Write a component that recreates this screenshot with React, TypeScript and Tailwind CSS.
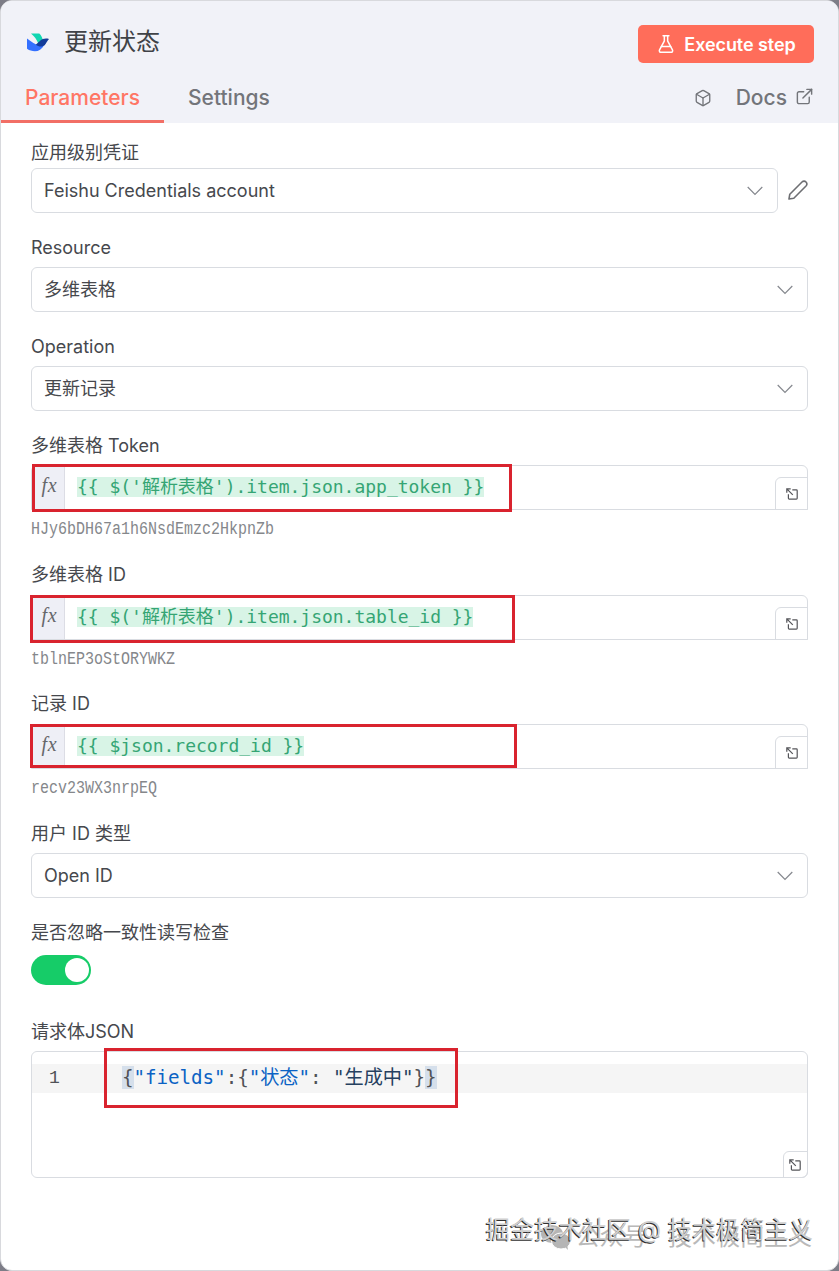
import type { ReactNode } from 'react'
import { Box, ExternalLink, FlaskConical } from 'lucide-react'

function FeishuLogo() {
  return (
    <svg className="h-[19px] w-6" viewBox="0 0 24 19" fill="none">
      <path d="M5 .6h8.300c1.700 1.700 2.800 3.700 3.400 6l-4.300 4.200C10.700 6.800 8.400 3.300 5 .6Z" fill="#10d6b2" />
      <path d="M1 5.500c4 3 8.500 6.500 13.500 7.300 1.500 0 2.600-.3 3.800-.9-2.500 4.200-5.600 6.300-9.400 6.300-3 0-5.600-.8-7.500-2.100-.3-.2-.4-.5-.4-.9V5.500Z" fill="#3370ff" />
      <path d="M23 6c-1.800 1.600-2.700 4.300-4.400 6.200-2.600 2.100-6 1.700-8.800-.4 3.500-3 6.200-7.600 13.200-5.800Z" fill="#133c9a" />
    </svg>
  )
}

function Chevron() {
  return (
    <svg className="h-[10px] w-4" viewBox="0 0 16 10" fill="none" stroke="#85888e" strokeWidth="1.2">
      <path d="m.7 1 7.300 7.400L15.300 1" />
    </svg>
  )
}

function Pencil() {
  return (
    <svg className="-mt-px h-5 w-5" viewBox="0 0 20 20" fill="none" stroke="#6e6f73" strokeWidth="1.600" strokeLinejoin="round">
      <path d="m1 19 .8-4.800L14 2c1.200-1.200 2.900-1.200 4 0s1.100 2.800 0 4L5.800 18.200 1 19Z" />
    </svg>
  )
}

function ExpandIcon() {
  return (
    <svg className="h-3 w-3" viewBox="0 0 12 12" fill="none" stroke="#55565a" strokeWidth="1.200">
      <path d="M.8 4.700V.8h3.900M.8.8l6 6M6.300 1.900h4.100c.5 0 .8.300.8.800v7.600c0 .5-.3.800-.8.800H3.200c-.5 0-.8-.3-.8-.8V6.300" />
    </svg>
  )
}

function Label({ children }: { children: ReactNode }) {
  return <div className="h-7 text-[18px] leading-[30px] text-[#46484d]">{children}</div>
}

function Select({ value }: { value: string }) {
  return (
    <div className="flex h-[45px] flex-1 items-center justify-between rounded-md border border-[#d9dce1] pl-3 pr-[14px] text-[18px] text-[#46484d]">
      <span>{value}</span>
      <Chevron />
    </div>
  )
}

function SelectField({ label, value }: { label: string; value: string }) {
  return (
    <div className="mb-5 flex flex-col gap-1.5">
      <Label>{label}</Label>
      <div className="flex">
        <Select value={value} />
      </div>
    </div>
  )
}

type ExpressionProps = {
  label: string
  result: string
  highlight: string
  className: string
  children: ReactNode
}

function ExpressionField({ label, result, highlight, className, children }: ExpressionProps) {
  return (
    <div className={className}>
      <Label>{label}</Label>
      <div className="relative mt-1.5 flex h-[45px] rounded-t-md border border-[#d9dce1]">
        <div className="flex w-[33px] justify-center rounded-tl-md border-r border-[#dcdde5] bg-[#eeeff6] pl-[3px] pt-[5px] font-['Liberation_Serif',serif] text-[20px] italic leading-7 tracking-[0.8px] text-[#66676b]">
          fx
        </div>
        <div className="flex-1 whitespace-pre pl-3 pt-[11px] font-['DejaVu_Sans_Mono','Noto_Sans_CJK_SC',monospace] text-[18px] leading-5 tracking-[-0.02px] text-[#35a574]">
          <span className="inline-block h-5 bg-[#d8f4e6]">{children}</span>
        </div>
        <div className="-mb-px -mr-px flex h-[33px] w-[33px] items-center justify-center self-end rounded-tl-md border border-[#d9dce1]">
          <ExpandIcon />
        </div>
        <div className={`pointer-events-none absolute border-[3px] border-[#d9232e] ${highlight}`} />
      </div>
      <div className="pt-[7px] font-['Liberation_Mono',monospace] text-[18px] leading-6 text-[#85878b]">
        <span className="inline-block origin-left scale-x-[0.833]">{result}</span>
      </div>
    </div>
  )
}

export default function App() {
  return (
    <div className="h-[1271px] w-[839px] bg-[#7d7d87] font-['Inter','Noto_Sans_CJK_SC',sans-serif]">
      <main className="relative flex h-full flex-col overflow-hidden rounded-[12px] border border-[#d8d9dd] bg-white">
        <header className="flex h-[122px] shrink-0 flex-col justify-between bg-[#f1f2f8]">
          <div className="flex justify-between pl-[25px] pr-6 pt-6">
            <div className="flex h-[34px] items-center gap-[14px]">
              <FeishuLogo />
              <h1 className="text-[24px] leading-8 text-[#404247]">更新状态</h1>
            </div>
            <button className="flex h-[38px] w-[176px] items-center justify-center gap-2 rounded-[5px] bg-[#ff6d5a] text-[18px] font-semibold tracking-[-0.08px] text-white">
              <FlaskConical className="h-5 w-5" strokeWidth={1.8} />
              Execute step
            </button>
          </div>
          <div className="flex items-end justify-between pr-6 text-[21px] font-medium text-[#73757a]">
            <nav className="flex">
              <span className="h-[51px] w-[163px] border-b-[3px] border-[#f26f66] pl-6 pt-[10px] leading-8 text-[#ff7665]">
                Parameters
              </span>
              <span className="pl-6 pt-[10px] leading-8">Settings</span>
            </nav>
            <div className="flex h-[51px] items-center">
              <Box className="mr-6 h-[18px] w-[18px]" strokeWidth={1.8} />
              <span className="mr-2">Docs</span>
              <ExternalLink className="mb-[3px] h-[19px] w-[19px]" strokeWidth={1.8} />
            </div>
          </div>
        </header>

        <section className="flex flex-col px-[30px] pt-[15px]">
          <div className="mb-5 flex flex-col gap-0.5">
            <Label>应用级别凭证</Label>
            <div className="flex items-center gap-[10px]">
              <Select value="Feishu Credentials account" />
              <Pencil />
            </div>
          </div>
          <SelectField label="Resource" value="多维表格" />
          <SelectField label="Operation" value="更新记录" />

          <ExpressionField
            className="h-[129px]"
            label="多维表格 Token"
            result="HJy6bDH67a1h6NsdEmzc2HkpnZb"
            highlight="left-0 -top-[2px] h-12 w-[480px]"
          >
            {"{{ $('解析表格').item.json.app_token }}"}
          </ExpressionField>
          <ExpressionField
            className="h-[129px] [&>div:nth-child(2)]:mt-[7px]"
            label="多维表格 ID"
            result="tblnEP3oStORYWKZ"
            highlight="-left-[2px] -top-px h-12 w-[485px]"
          >
            {"{{ $('解析表格').item.json.table_id }}"}
          </ExpressionField>
          <ExpressionField
            className="h-[130px] [&>div:nth-child(2)]:mt-[7px]"
            label="记录 ID"
            result="recv23WX3nrpEQ"
            highlight="-left-[2px] -top-px h-11 w-[487px]"
          >
            {'{{ $json.record_id }}'}
          </ExpressionField>

          <SelectField label="用户 ID 类型" value="Open ID" />

          <div className="mb-8 flex flex-col gap-[9px]">
            <Label>是否忽略一致性读写检查</Label>
            <div className="flex h-[30px] w-[60px] items-center justify-end rounded-full bg-[#16cc68] pr-0.5">
              <div className="h-6 w-6 rounded-full bg-white" />
            </div>
          </div>

          <Label>请求体JSON</Label>
          <div className="relative mt-1.5 flex h-[127px] flex-col justify-between rounded-md border border-[#d9dce1] pt-3">
            <div className="flex h-[29px] whitespace-pre bg-[#f5f5f5] font-['DejaVu_Sans_Mono','Noto_Sans_CJK_SC',monospace] leading-7 text-[#505257]">
              <span className="w-[90px] pl-[17px] font-['Liberation_Mono',monospace] text-[18px]">1</span>
              <code className="font-[inherit] text-[19.2px] tracking-[-0.04px]">
                <span className="bg-[#d5dfeb]">{'{'}</span>
                <span className="text-[#0b62c4]">"fields"</span>
                {':{'}
                <span className="text-[#0b62c4]">"状态"</span>
                {': '}
                <span className="text-[#26405f]">"生成中"</span>
                {'}'}
                <span className="bg-[#d5dfeb]">{'}'}</span>
              </code>
            </div>
            <div className="-mb-px -mr-px flex h-[27px] w-[25px] items-center justify-center self-end rounded-br-md rounded-tl-md border border-[#d9dce1] pr-px">
              <ExpandIcon />
            </div>
            <div className="pointer-events-none absolute -top-1 left-[72px] h-[60px] w-[354px] border-[3px] border-[#d9232e]" />
          </div>
        </section>

        {/* account watermark, with the community credit laid over it */}
        <div className="absolute bottom-[19px] right-[26px] flex items-center gap-1 whitespace-pre text-[24px] leading-7 text-[#b9b9b9]">
          <svg className="h-7 w-8" viewBox="0 0 32 28" fill="#b5b5b5">
            <ellipse cx="12" cy="11" rx="11" ry="9" />
            <ellipse cx="21" cy="18" rx="9.500" ry="8" stroke="#fff" />
            <path d="m24 23 4 4-1-6Z" />
          </svg>
          <span>公众号 · 技术极简主义</span>
        </div>
        <div className="absolute bottom-[24px] right-[25px] whitespace-pre text-[24.2px] leading-8 text-[#cfcfcf] [text-shadow:-1px_1px_0_#303030]">
          掘金技术社区 @ 技术极简主义
        </div>
      </main>
    </div>
  )
}
